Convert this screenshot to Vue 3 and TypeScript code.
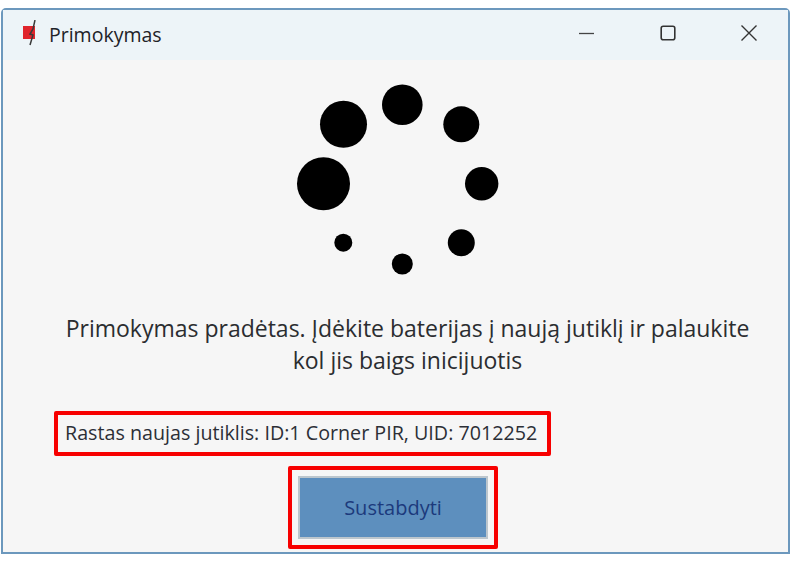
<script setup lang="ts">
interface Dot { cx: number; cy: number; r: number }
const dots: Dot[] = [
  { cx: 43.5, cy: 102.7, r: 26.5 },
  { cx: 63.5, cy: 43.3, r: 23.5 },
  { cx: 122.3, cy: 23.7, r: 20.3 },
  { cx: 181.3, cy: 43.3, r: 18 },
  { cx: 201.7, cy: 102.7, r: 16.7 },
  { cx: 181.3, cy: 161.7, r: 13.5 },
  { cx: 122.3, cy: 183, r: 10.5 },
  { cx: 63.3, cy: 161.7, r: 9 }
]
</script>

<template>
  <div class="page">
    <div class="window">
      <header class="titlebar">
        <svg class="app-icon" width="16" height="30" viewBox="0 0 16 30">
          <rect x="2" y="6" width="12" height="13" fill="#e0242c" />
          <path d="M14 0 L12 9 L9 14 L12 15 L9 25" fill="none" stroke="#3a3a3a" stroke-width="1.5" />
        </svg>
        <span class="title">Primokymas</span>
        <div class="controls">
          <svg width="18" height="18" viewBox="0 0 18 18"><path d="M1 9.5H16" stroke="#444" stroke-width="1.3" /></svg>
          <svg width="18" height="18" viewBox="0 0 18 18"><rect x="2.2" y="2.2" width="13.6" height="13.6" rx="2" fill="none" stroke="#333" stroke-width="1.6" /></svg>
          <svg width="18" height="18" viewBox="0 0 18 18"><path d="M1.5 1.5L16.5 16.5M16.5 1.5L1.5 16.5" stroke="#333" stroke-width="1.4" /></svg>
        </div>
      </header>
      <main class="content">
        <svg class="spinner" width="230" height="196" viewBox="0 0 230 196">
          <circle v-for="d in dots" :key="d.cx + '-' + d.cy" :cx="d.cx" :cy="d.cy" :r="d.r" fill="#000" />
        </svg>
        <p class="message">Primokymas pradėtas. Įdėkite baterijas į naują jutiklį ir palaukite<br />kol jis baigs inicijuotis</p>
        <div class="found"><span class="found-text">Rastas naujas jutiklis: ID:1 Corner PIR, UID: 7012252</span></div>
        <div class="button-mark">
          <button class="stop" type="button">Sustabdyti</button>
        </div>
      </main>
    </div>
  </div>
</template>

<style>
html, body { margin: 0; background: #fff; }
</style>

<style scoped>
.page {
  width: 792px;
  height: 561px;
  padding: 8px 2px 7px 1px;
  box-sizing: border-box;
  font-family: "Open Sans", "Noto Sans", sans-serif;
}
.window {
  height: 100%;
  box-sizing: border-box;
  border: 2px solid #6c98bd;
  border-radius: 5px 5px 0 0;
  background: #f6f6f6;
  display: flex;
  flex-direction: column;
}
.titlebar {
  height: 50px;
  flex: none;
  display: flex;
  align-items: center;
  background: #edf4f8;
  padding-left: 18px;
  color: #222;
}
.app-icon { margin-right: 12px; }
.title { font-size: 19.5px; color: #1f2328; margin-bottom: 2px; }
.controls {
  margin-left: auto;
  margin-right: 30px;
  margin-bottom: 4px;
  display: flex;
  gap: 63px;
}
.content {
  flex: 1;
  display: flex;
  flex-direction: column;
  position: relative;
}
.spinner {
  margin: 21px 0 0 277px;
  flex: none;
}
.message {
  margin: 35px 0 0;
  padding-left: 27px;
  text-align: center;
  width: 755px;
  font-size: 23px;
  line-height: 32px;
  color: #2b2d30;
  white-space: nowrap;
}
.found {
  margin: 35px 0 0 51px;
  width: 497px;
  height: 45px;
  box-sizing: border-box;
  border: 4px solid #f70000;
  border-radius: 2px;
  padding-left: 7px;
  display: flex;
  align-items: center;
  font-size: 19.7px;
  color: #2c2f36;
  white-space: nowrap;
}
.found-text { margin-bottom: 3px; }
.button-mark {
  margin: 10px 0 0 285px;
  width: 210px;
  height: 83px;
  box-sizing: border-box;
  border: 4px solid #f70000;
  border-radius: 2px;
  padding: 6px;
}
.stop {
  display: block;
  width: 100%;
  height: 100%;
  border: 2px solid #bcc6cd;
  background: #5d8fbe;
  color: #1c3a7c;
  font-family: inherit;
  font-size: 20px;
  padding: 0;
}
</style>
